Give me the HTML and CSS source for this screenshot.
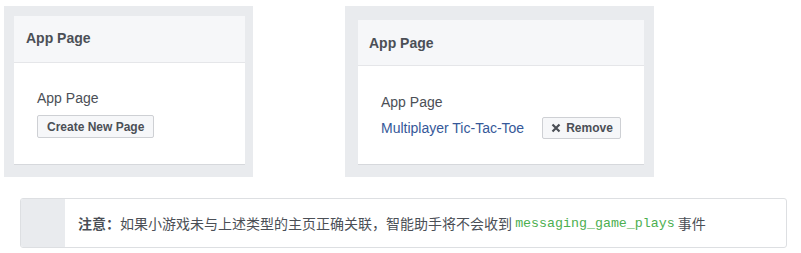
FILE: index.html
```html
<!DOCTYPE html>
<html lang="zh">
<head>
<meta charset="utf-8">
<link rel="stylesheet" href="styles.css">
</head>
<body>
<div class="page">
  <div class="shots">
    <div class="shot shot-a">
      <div class="card card-a">
        <div class="card-head">App Page</div>
        <div class="card-body">
          <div class="label">App Page</div>
          <button class="btn">Create New Page</button>
        </div>
      </div>
    </div>
    <div class="shot shot-b">
      <div class="card card-b">
        <div class="card-head">App Page</div>
        <div class="card-body">
          <div class="label">App Page</div>
          <div class="row">
            <a class="link">Multiplayer Tic-Tac-Toe</a>
            <button class="btn btn-remove"><svg class="x" width="10" height="10" viewBox="0 0 10 10"><path d="M1.5 1.5 L8.5 8.5 M8.5 1.5 L1.5 8.5" stroke="#4b4f56" stroke-width="2.2" stroke-linecap="butt" fill="none"/></svg>Remove</button>
          </div>
        </div>
      </div>
    </div>
  </div>
  <div class="notice">
    <div class="notice-strip"></div>
    <div class="notice-text"><b>注意：</b>如果小游戏未与上述类型的主页正确关联，智能助手将不会收到 <code>messaging_game_plays</code> 事件</div>
  </div>
</div>
</body>
</html>
```
FILE: styles.css
```css
html, body {
  margin: 0;
  padding: 0;
  background: #ffffff;
}
body {
  font-family: "Liberation Sans", Arial, "Noto Sans CJK SC", sans-serif;
}
.page {
  padding-top: 6px;
}
.shots {
  display: flex;
  gap: 92px;
  padding-left: 4px;
}
.shot {
  background: #e9ebee;
  box-sizing: border-box;
  height: 171px;
}
.shot-a {
  width: 249px;
  padding: 10px 8px 0 10px;
}
.shot-b {
  width: 309px;
  padding: 14px 10px 0 13px;
}
.card {
  background: #ffffff;
  border-bottom: 1px solid #d6d8dc;
}
.card-head {
  background: #f6f7f9;
  border-bottom: 1px solid #e5e6e9;
  color: #4b4f56;
  font-weight: bold;
  font-size: 14px;
  line-height: 16px;
  padding: 14px 12px 16px;
}
.card-b .card-head {
  padding: 15px 11px 14px;
}
.card-body {
  padding: 27px 23px 26px;
}
.card-b .card-body {
  padding: 28px 10px 25px 23px;
}
.label {
  color: #4b4f56;
  font-size: 14px;
  line-height: 16px;
}
.btn {
  display: inline-flex;
  align-items: center;
  margin-top: 9px;
  height: 23px;
  padding: 0 9px;
  box-sizing: border-box;
  background: #f6f7f9;
  border: 1px solid #ced0d4;
  border-radius: 2px;
  color: #4b4f56;
  font-family: "Liberation Sans", Arial, sans-serif;
  font-weight: bold;
  font-size: 12px;
  line-height: 14px;
  white-space: nowrap;
}
.row {
  display: flex;
  align-items: center;
  gap: 18px;
  margin-top: 7px;
}
.link {
  color: #365899;
  font-size: 14px;
  line-height: 16px;
  white-space: nowrap;
  flex: none;
}
.btn-remove {
  margin-top: 0;
  height: 22px;
  padding: 0 7px 0 8px;
  gap: 5px;
  flex: none;
}
.x {
  display: block;
}
.notice {
  display: flex;
  margin: 21px 14px 0 20px;
  height: 50px;
  box-sizing: border-box;
  border: 1px solid #dddfe2;
  border-radius: 3px;
  overflow: hidden;
}
.notice-strip {
  width: 44px;
  background: #e9ebee;
  flex: none;
}
.notice-text {
  display: flex;
  align-items: center;
  padding-left: 13px;
  color: #4b4f56;
  font-family: "Noto Sans CJK SC", "Liberation Sans", sans-serif;
  font-size: 14px;
  white-space: pre;
}
.notice-text b {
  font-weight: bold;
  color: #4b4f56;
}
.notice-text code {
  font-family: "Liberation Mono", "Courier New", monospace;
  font-size: 13.3px;
  color: #4caf50;
}
```
